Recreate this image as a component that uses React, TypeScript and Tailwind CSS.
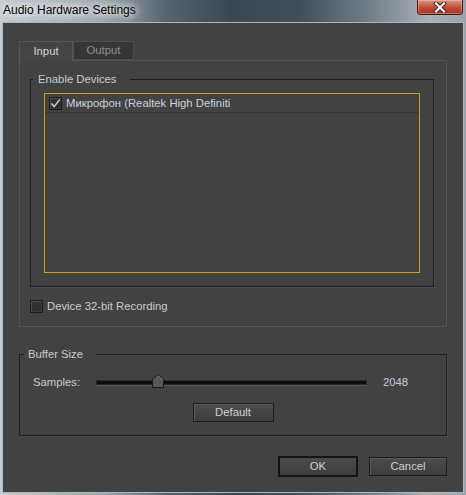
import React from "react";

const UI = "font-['Liberation_Sans',Arial,sans-serif]";

function CheckBox({ checked }: { checked?: boolean }) {
  return (
    <div className="w-[13px] h-[13px] shrink-0 border border-[#1b1b1b] bg-[#2f2f2f] shadow-[inset_1px_1px_0_#4d4d4d,inset_-1px_-1px_0_#3a3a3a] flex items-center justify-center">
      {checked && (
        <svg width="11" height="11" viewBox="0 0 11 11">
          <path d="M1.5 5.5 L4.2 8.6 L9.6 1.6" fill="none" stroke="#cfd2d5" strokeWidth="1.5" />
        </svg>
      )}
    </div>
  );
}

function GroupBox({
  title,
  className,
  labelClass,
  children,
}: {
  title: string;
  className: string;
  labelClass: string;
  children: React.ReactNode;
}) {
  return (
    <div className={`border border-[#1f1f1f] shadow-[1px_1px_0_#4c4c4c] ${className}`}>
      <div className={`-mt-[8px] h-[14px] leading-[14px] w-fit bg-[#424242] text-[#c6ccd2] text-[11.3px] ${labelClass}`}>
        {title}
      </div>
      {children}
    </div>
  );
}

function Button({ label, primary }: { label: string; primary?: boolean }) {
  return (
    <div
      className={`flex items-center justify-center bg-gradient-to-b from-[#4c4c4c] to-[#3d3d3d] text-[#cdd2d7] text-[11.3px] ${
        primary
          ? "w-[80px] h-[21px] border-2 border-[#141414]"
          : "w-[78px] h-[19px] border border-[#1c1c1c] shadow-[inset_1px_1px_0_#5a5a5a]"
      }`}
    >
      {label}
    </div>
  );
}

export default function App() {
  return (
    <div
      className={`${UI} w-[466px] h-[495px] flex flex-col bg-[linear-gradient(90deg,#c3ccd2_0%,#9aa5ad_22%,#56636e_36%,#3a4753_50%,#414e59_64%,#75818a_80%,#a9b2b9_92%,#98a3ab_100%)] overflow-hidden`}
    >
      {/* title bar */}
      <div className="h-[22px] flex items-start justify-between pr-[3px]">
        <div className="pl-[3px] pt-[3px] text-[12px] leading-[15px] text-black [text-shadow:0_0_6px_#ffffff,0_0_10px_#ffffff,0_0_16px_#e6ecf0]">
          Audio Hardware Settings
        </div>
        <div className="w-[46px] h-[15px] rounded-b-[4px] border border-t-0 border-[#4a1810] bg-gradient-to-b from-[#dc9486] via-[#c24e3b] to-[#a9321f] shadow-[inset_0_0_0_1px_rgba(255,210,200,0.4)] flex items-center justify-center">
          <svg width="14" height="11" viewBox="0 0 14 11">
            <path d="M3 1.5 L11 9.5 M11 1.5 L3 9.5" stroke="#3a1a16" strokeWidth="4" strokeLinecap="square" />
            <path d="M3 1.5 L11 9.5 M11 1.5 L3 9.5" stroke="#ffffff" strokeWidth="2.2" strokeLinecap="square" />
          </svg>
        </div>
      </div>

      {/* client */}
      <div className="mx-[2px] mb-[2px] flex-1 border border-[#aeb8c0] bg-[#424242] flex flex-col pt-[18px] pl-[16px]">
        {/* tabs */}
        <div className="flex items-end h-[19px]">
          <div className="relative z-10 w-[54px] h-[20px] -mb-px border border-b-0 border-[#565656] bg-[#444444] text-[#d0d5da] text-[11.3px] flex items-center justify-center pb-[1px]">
            Input
          </div>
          <div className="w-[61px] h-[19px] border border-[#4e4e4e] bg-[#353535] text-[#8a8d90] text-[11.3px] flex items-center justify-center">
            Output
          </div>
        </div>

        {/* tab panel */}
        <div className="w-[428px] h-[267px] border border-[#555555] pt-[18px] pl-[10px]">
          <GroupBox title="Enable Devices" className="w-[404px] h-[208px] px-[13px]" labelClass="-ml-[11px] pl-[5px] pr-[13px]">
            <div className="mt-[7px] h-[180px] border border-[#d49b1e]">
              <div className="h-[19px] border-b border-[#353535] flex items-center pl-[4px] gap-[4px]">
                <CheckBox checked />
                <span className="text-[#cdd2d7] text-[11.3px] leading-[14px]">Микрофон (Realtek High Definiti</span>
              </div>
            </div>
          </GroupBox>

          <div className="mt-[12px] flex items-center gap-[4px]">
            <CheckBox />
            <span className="text-[#c6ccd2] text-[11.3px] leading-[14px]">Device 32-bit Recording</span>
          </div>
        </div>

        {/* buffer size */}
        <GroupBox title="Buffer Size" className="mt-[27px] w-[428px] h-[82px] px-[13px]" labelClass="-ml-[9px] pl-[4px] pr-[13px]">
          <div className="mt-[13px] h-[16px] flex items-center">
            <span className="w-[63px] text-[#c6ccd2] text-[11.3px]">Samples:</span>
            <div className="relative w-[271px] h-[5px] bg-[#0d0d0d] border border-[#2a2a2a] shadow-[0_1px_0_#555555]">
              <svg className="absolute left-[55px] -top-[7px]" width="12" height="14" viewBox="0 0 12 14">
                <path d="M6 0.5 L11.5 5 L11.5 13.5 L0.5 13.5 L0.5 5 Z" fill="#575757" stroke="#181818" strokeWidth="1" />
                <path d="M6 1.8 L10.5 5.4 L10.5 6" fill="none" stroke="#7a7a7a" strokeWidth="1" />
              </svg>
            </div>
            <span className="ml-[16px] text-[#c6ccd2] text-[11.3px]">2048</span>
          </div>
          <div className="mt-[13px] flex justify-center">
            <div className="w-[81px] h-[19px] border border-[#1c1c1c] bg-gradient-to-b from-[#4c4c4c] to-[#3d3d3d] shadow-[inset_1px_1px_0_#5a5a5a] text-[#cdd2d7] text-[11.3px] flex items-center justify-center">
              Default
            </div>
          </div>
        </GroupBox>

        {/* dialog buttons */}
        <div className="mt-[20px] flex items-center justify-end gap-[11px] pr-[16px] h-[21px]">
          <Button label="OK" primary />
          <Button label="Cancel" />
        </div>
      </div>
    </div>
  );
}
